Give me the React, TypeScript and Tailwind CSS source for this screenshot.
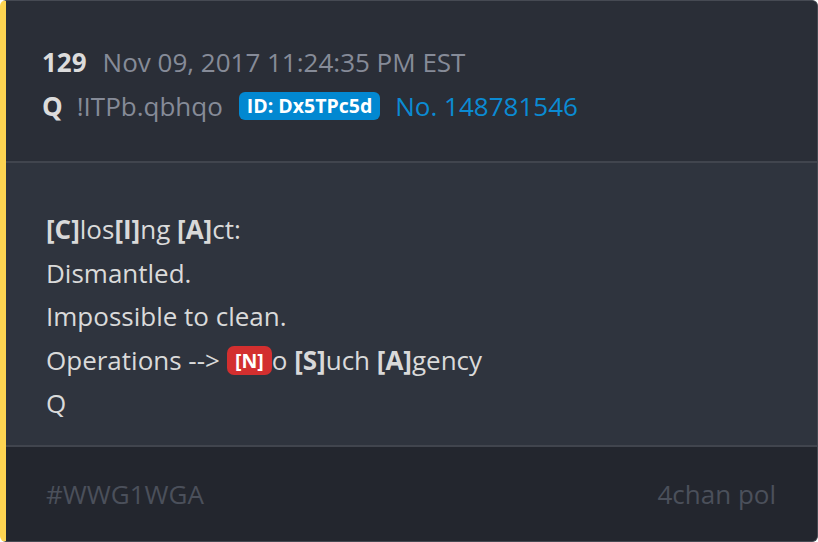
import React from "react";

const B = ({ children }: { children: React.ReactNode }) => (
  <span className="font-bold text-[#d9d9d9]">{children}</span>
);

export default function App() {
  return (
    <div
      className="w-[818px] h-[542px] bg-white"
      style={{ fontFamily: '"Open Sans", "Noto Sans", sans-serif' }}
    >
      <div className="w-full h-full flex flex-col rounded-[6px] overflow-hidden border border-[#464a53] border-l-[6px] border-l-[#fdd451] bg-[#2f343e]">
        <div className="bg-[#2a2e37] pl-[36px] pt-[39px] pb-[33px] border-b-2 border-[#41454e] text-[26px] leading-[44px]">
          <div className="flex items-center">
            <span className="font-bold text-[#dcdcdc]">129</span>
            <span className="ml-[16px] text-[#868b98]">Nov 09, 2017 11:24:35 PM EST</span>
          </div>
          <div className="flex items-center">
            <span className="font-bold text-[#dcdcdc]">Q</span>
            <span className="ml-[14px] text-[#868b98]">!ITPb.qbhqo</span>
            <span className="ml-[16px] bg-[#0288d1] text-white font-bold text-[19.5px] leading-[28px] px-[8px] rounded-[6px]">
              ID: Dx5TPc5d
            </span>
            <span className="ml-[15px] text-[#0b8bd3]">No. 148781546</span>
          </div>
        </div>
        <div className="flex-1 pl-[40px] pt-[45px] text-[26px] leading-[43.5px] text-[#dadada] border-b-2 border-[#41454e]">
          <div>
            <B>[C]</B>los<B>[I]</B>ng <B>[A]</B>ct:
          </div>
          <div>Dismantled.</div>
          <div>Impossible to clean.</div>
          <div className="flex items-center whitespace-pre">
            <span>Operations --&gt;</span>
            <span className="ml-[7px] bg-[#d32f2f] text-white font-bold text-[19.5px] leading-[29px] px-[8px] rounded-[7px]">
              [N]
            </span>
            <span>
              o <B>[S]</B>uch <B>[A]</B>gency
            </span>
          </div>
          <div>Q</div>
        </div>
        <div className="h-[94px] bg-[#23262e] flex items-center justify-between pl-[40px] pr-[41px] text-[26px] text-[#4b505b]">
          <span>#WWG1WGA</span>
          <span>4chan pol</span>
        </div>
      </div>
    </div>
  );
}
